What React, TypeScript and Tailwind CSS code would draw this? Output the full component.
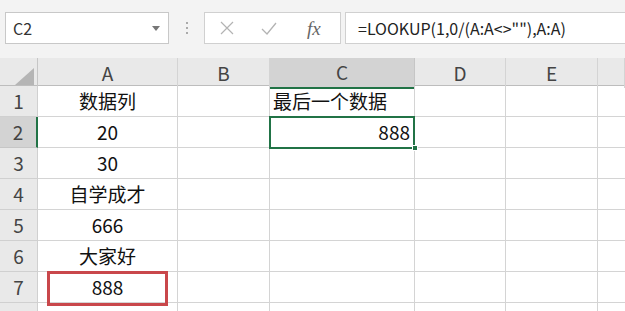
const font = "font-['Noto_Sans_CJK_SC','Noto_Sans',sans-serif]";

const cols = ["A", "B", "C", "D", "E", ""];

const rows: { n: number; a?: string; c?: string }[] = [
  { n: 1, a: "数据列", c: "最后一个数据" },
  { n: 2, a: "20", c: "888" },
  { n: 3, a: "30" },
  { n: 4, a: "自学成才" },
  { n: 5, a: "666" },
  { n: 6, a: "大家好" },
  { n: 7, a: "888" },
  { n: 8 },
];

// ─── Formula bar ──────────────────────────────────────────────────────────────

function FormulaBar() {
  return (
    <div className="flex h-[58px] items-center bg-[#f3f3f3] pb-[2px]">
      <div className="ml-[5px] flex h-[32px] w-[164px] items-center justify-between border border-[#c8c8c8] bg-white pl-[7px] pr-[8px]">
        <span className="text-[16px] text-[#333]">C2</span>
        <svg width="8" height="5" viewBox="0 0 8 5">
          <path d="M0 0h8L4 5z" fill="#777" />
        </svg>
      </div>
      <div className="ml-[17px] mr-[16px] flex flex-col gap-[3px]">
        <span className="h-[2px] w-[2px] bg-[#aaa]" />
        <span className="h-[2px] w-[2px] bg-[#aaa]" />
        <span className="h-[2px] w-[2px] bg-[#aaa]" />
      </div>
      <div className="flex h-[32px] w-[137px] items-center border border-[#d0d0d0] bg-white">
        <svg width="14" height="14" viewBox="0 0 14 14" className="ml-[15px]">
          <path d="M1 1l12 12M13 1L1 13" stroke="#b3b3b3" strokeWidth="1.2" />
        </svg>
        <svg width="16" height="13" viewBox="0 0 16 13" className="ml-[27px]">
          <path d="M1 7l5 5L15 1" stroke="#b3b3b3" strokeWidth="1.3" fill="none" />
        </svg>
        <span className="ml-[30px] font-['Liberation_Serif',serif] text-[19px] italic leading-none text-[#666]">
          fx
        </span>
      </div>
      <div className="ml-[4px] flex h-[32px] flex-1 items-center border border-r-0 border-[#d0d0d0] bg-white pl-[12px]">
        <span className="text-[16px] text-[#222]">=LOOKUP(1,0/(A:A&lt;&gt;""),A:A)</span>
      </div>
    </div>
  );
}

// ─── Grid ─────────────────────────────────────────────────────────────────────

const gridCols = "grid grid-cols-[38px_140px_92px_145px_91px_92px_1fr]";

function HeaderRow() {
  return (
    <div className={`${gridCols} h-[28px] bg-[#e9e9e9] border-b border-[#bdbdbd]`}>
      <div className="flex items-end justify-end border-r border-[#c6c6c6] pb-[3px] pr-[3px]">
        <svg width="19" height="17" viewBox="0 0 19 17">
          <path d="M19 0V17H0z" fill="#b5b5b5" />
        </svg>
      </div>
      {cols.map((c, i) =>
        c === "C" ? (
          <div
            key={i}
            className="flex items-center justify-center border-r border-[#c6c6c6] border-b-2 border-b-[#217346] bg-[#d3d3d3] text-[19px] text-[#444] mb-[-1px]"
          >
            {c}
          </div>
        ) : (
          <div
            key={i}
            className="flex items-center justify-center border-r border-[#d4d4d4] text-[19px] text-[#444]"
          >
            {c}
          </div>
        )
      )}
    </div>
  );
}

function Row({ n, a, c }: { n: number; a?: string; c?: string }) {
  return (
    <div className={`${gridCols} h-[31px]`}>
      <div
        className={
          n === 2
            ? "flex items-center justify-center border-b border-r-2 border-[#c6c6c6] border-r-[#217346] bg-[#d3d3d3] text-[19px] text-[#444]"
            : "flex items-center justify-center border-b border-r border-[#d0d0d0] bg-[#e9e9e9] text-[19px] text-[#444]"
        }
      >
        {/* row 8 only peeks in at the bottom edge, its number is out of view */}
        {n < 8 ? n : null}
      </div>
      <div className="relative flex items-center justify-center border-b border-r border-[#d4d4d4] text-[19px] text-[#111]">
        {a}
        {n === 7 && (
          <div className="absolute left-[9px] top-[-1px] h-[35px] w-[121px] border-[3px] border-[#c9474b]" />
        )}
      </div>
      <div className="border-b border-r border-[#d4d4d4]" />
      <div
        className={
          n === 2
            ? "relative flex items-center justify-end pr-[4px] text-[19px] text-[#111] border-b border-r border-[#d4d4d4]"
            : "flex items-center pl-[3px] text-[19px] text-[#111] border-b border-r border-[#d4d4d4]"
        }
      >
        {c}
        {n === 2 && (
          <>
            <div className="absolute left-[-1px] top-[-1px] h-[33px] w-[146px] border-2 border-[#217346]" />
            <div className="absolute right-[-4px] bottom-[-4px] h-[6px] w-[6px] border border-white bg-[#217346]" />
          </>
        )}
      </div>
      <div className="border-b border-r border-[#d4d4d4]" />
      <div className="border-b border-r border-[#d4d4d4]" />
      <div className="border-b border-[#d4d4d4]" />
    </div>
  );
}

export default function App() {
  return (
    <div className={`h-[311px] w-[625px] overflow-hidden bg-white ${font}`}>
      <FormulaBar />
      <HeaderRow />
      {rows.map((r) => (
        <Row key={r.n} {...r} />
      ))}
    </div>
  );
}
